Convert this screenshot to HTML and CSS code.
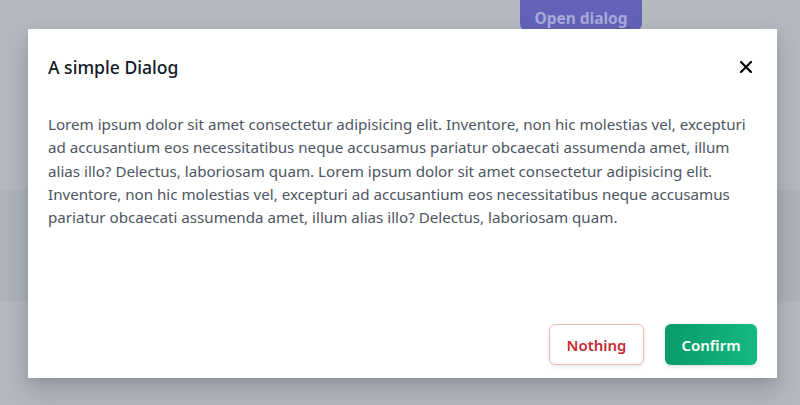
FILE: index.html
```html
<!DOCTYPE html>
<html lang="en">
<head>
<meta charset="utf-8">
<title>Dialog</title>
<link rel="stylesheet" href="styles.css">
</head>
<body>
<div class="page">
  <div class="topbar">
    <button class="open-btn">Open dialog</button>
  </div>
  <div class="band"></div>
</div>
<div class="overlay">
  <div class="dialog">
    <div class="dialog-header">
      <h2 class="dialog-title">A simple Dialog</h2>
      <button class="close-btn" aria-label="Close">
        <svg width="14" height="14" viewBox="0 0 14 14"><path d="M2 2 L12 12 M12 2 L2 12" stroke="#000" stroke-width="2.2" stroke-linecap="round"/></svg>
      </button>
    </div>
    <div class="dialog-body">
      <p>Lorem ipsum dolor sit amet consectetur adipisicing elit. Inventore, non hic molestias vel, excepturi ad accusantium eos necessitatibus neque accusamus pariatur obcaecati assumenda amet, illum alias illo? Delectus, laboriosam quam. Lorem ipsum dolor sit amet consectetur adipisicing elit. Inventore, non hic molestias vel, excepturi ad accusantium eos necessitatibus neque accusamus pariatur obcaecati assumenda amet, illum alias illo? Delectus, laboriosam quam.</p>
    </div>
    <div class="dialog-footer">
      <button class="btn btn-nothing">Nothing</button>
      <button class="btn btn-confirm">Confirm</button>
    </div>
  </div>
</div>
</body>
</html>
```
FILE: styles.css
```css
* { box-sizing: border-box; }
html, body { margin: 0; padding: 0; }
body {
  width: 800px;
  height: 405px;
  overflow: hidden;
  background: #b5b8bf;
  font-family: "Noto Sans", "Open Sans", sans-serif;
  position: relative;
}
.page {
  display: flex;
  flex-direction: column;
}
.topbar {
  height: 190px;
  padding-left: 520px;
}
.open-btn {
  width: 122px;
  height: 40px;
  margin-top: -10px;
  border: none;
  border-radius: 6px;
  background: #6262b9;
  color: #a9abd9;
  font-family: inherit;
  font-size: 15.5px;
  font-weight: 700;
  padding-top: 16px;
}
.band {
  height: 111px;
  background: #adb2bb;
}
.overlay {
  position: absolute;
  inset: 0;
  padding: 29px 23px 0 28px;
}
.dialog {
  width: 749px;
  height: 349px;
  background: #fff;
  display: flex;
  flex-direction: column;
  box-shadow: 0 12px 24px rgba(40, 44, 56, 0.22), 0 4px 8px rgba(40, 44, 56, 0.08);
}
.dialog-header {
  display: flex;
  align-items: center;
  justify-content: space-between;
  padding: 24px 24px 0 20px;
}
.dialog-title {
  margin: 0;
  font-size: 17.6px;
  line-height: 28px;
  font-weight: 500;
  color: #111827;
}
.close-btn {
  border: none;
  background: none;
  padding: 0;
  width: 14px;
  height: 14px;
  display: flex;
}
.dialog-body {
  padding: 32px 20px 0 20px;
  flex: 1;
}
.dialog-body p {
  margin: 0;
  font-size: 15.15px;
  line-height: 23.3px;
  color: #4d5562;
}
.dialog-footer {
  display: flex;
  justify-content: flex-end;
  gap: 21px;
  padding: 0 20px 13px 20px;
}
.btn {
  font-family: inherit;
  font-size: 15px;
  font-weight: 600;
  border-radius: 6px;
  height: 41px;
  cursor: pointer;
}
.btn-nothing {
  width: 95px;
  background: #fff;
  color: #c62a35;
  border: 1px solid #f2b8b8;
  box-shadow: 0 2px 4px rgba(0, 0, 0, 0.08);
}
.btn-confirm {
  width: 92px;
  border: none;
  color: #fff;
  background: linear-gradient(to right, #079b69, #14b982);
  box-shadow: 0 2px 4px rgba(0, 0, 0, 0.12);
}
```
